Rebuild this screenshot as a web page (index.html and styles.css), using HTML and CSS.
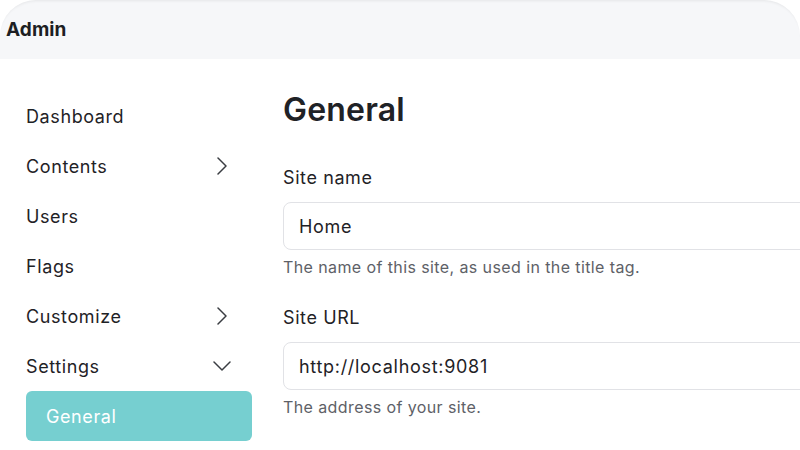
FILE: index.html
```html
<!DOCTYPE html>
<html lang="en">
<head>
<meta charset="utf-8">
<title>Admin</title>
<link rel="stylesheet" href="styles.css">
</head>
<body>
<header class="topbar">
  <span class="brand">Admin</span>
</header>
<div class="layout">
  <nav class="sidebar">
    <ul class="menu">
      <li class="menu-item">Dashboard</li>
      <li class="menu-item">Contents
        <svg class="chev" viewBox="0 0 18 18" width="18" height="18"><polyline points="5,1 13,9 5,17"/></svg>
      </li>
      <li class="menu-item">Users</li>
      <li class="menu-item">Flags</li>
      <li class="menu-item">Customize
        <svg class="chev" viewBox="0 0 18 18" width="18" height="18"><polyline points="5,1 13,9 5,17"/></svg>
      </li>
      <li class="menu-item">Settings
        <svg class="chev" viewBox="0 0 18 18" width="18" height="18"><polyline points="1,5 9,13 17,5"/></svg>
      </li>
      <li class="menu-item sub active">General</li>
    </ul>
  </nav>
  <main class="content">
    <h1 class="title">General</h1>
    <div class="field">
      <label class="field-label" for="site-name">Site name</label>
      <input class="field-input" id="site-name" type="text" value="Home">
      <p class="field-help">The name of this site, as used in the title tag.</p>
    </div>
    <div class="field">
      <label class="field-label" for="site-url">Site URL</label>
      <input class="field-input" id="site-url" type="text" value="http://localhost:9081">
      <p class="field-help">The address of your site.</p>
    </div>
  </main>
</div>
</body>
</html>
```
FILE: styles.css
```css
* { box-sizing: border-box; }
html, body {
  margin: 0;
  padding: 0;
  background: #ffffff;
  overflow: hidden;
}
body {
  font-family: Inter, "Noto Sans", "Liberation Sans", sans-serif;
  color: #1f2226;
  width: 800px;
  height: 450px;
}
.topbar {
  height: 59px;
  background: #f6f7f9;
  border-radius: 36px 36px 0 0;
  box-shadow: inset 0 3px 3px -2px rgba(0, 0, 0, 0.07);
  display: flex;
  align-items: center;
  padding-left: 6px;
}
.brand {
  font-size: 19px;
  font-weight: 700;
  color: #1d1f23;
  letter-spacing: 0.1px;
}
.layout {
  display: flex;
  gap: 31px;
  padding: 32px 0 0 26px;
}
.sidebar {
  flex: 0 0 226px;
}
.menu {
  list-style: none;
  margin: 0;
  padding: 0;
}
.menu-item {
  height: 50px;
  display: flex;
  align-items: center;
  justify-content: space-between;
  padding-right: 21px;
  font-size: 18px;
  letter-spacing: 0.6px;
  color: #1f2226;
}
.menu-item.sub {
  padding-left: 20px;
}
.menu-item.active {
  background: #76cfd0;
  color: #ffffff;
  border-radius: 6px;
}
.chev {
  display: block;
  fill: none;
  stroke: #3a3d42;
  stroke-width: 1.5;
  stroke-linecap: round;
  stroke-linejoin: round;
}
.content {
  flex: 0 0 600px;
}
.title {
  margin: -1px 0 0;
  font-size: 32px;
  line-height: 40px;
  font-weight: 600;
  color: #1f2226;
  letter-spacing: 0.2px;
}
.field {
  margin-top: 36px;
  display: flex;
  flex-direction: column;
}
.field + .field {
  margin-top: 28px;
}
.field-label {
  font-size: 18px;
  line-height: 24px;
  letter-spacing: 0.6px;
  color: #1f2226;
}
.field-input {
  margin-top: 12px;
  width: 600px;
  height: 48px;
  border: 1px solid #e1e2e6;
  border-radius: 8px;
  padding: 0 15px;
  font: inherit;
  font-size: 18px;
  letter-spacing: 0.7px;
  color: #1f2226;
  background: #ffffff;
  outline: none;
}
.field-help {
  margin: 6px 0 0;
  font-size: 16px;
  line-height: 22px;
  letter-spacing: 0.4px;
  color: #5e6167;
}
```
